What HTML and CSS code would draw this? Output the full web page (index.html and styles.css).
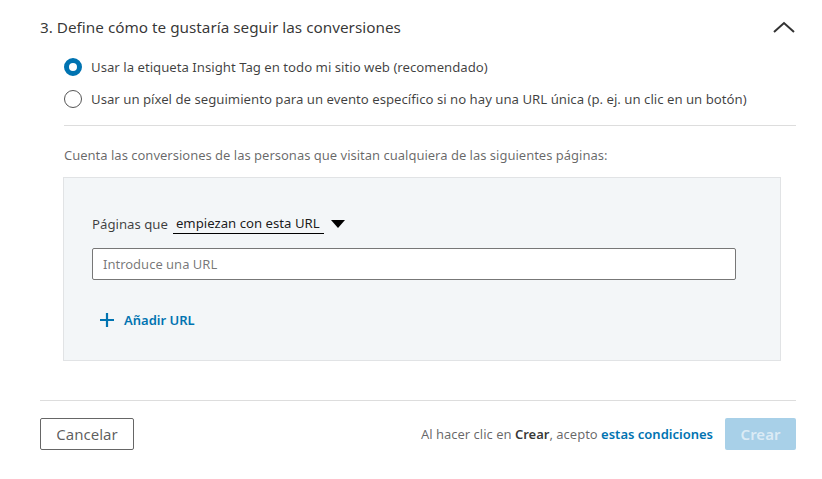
FILE: index.html
```html
<!DOCTYPE html>
<html lang="es">
<head>
    <meta charset="UTF-8">
    <meta name="viewport" content="width=device-width, initial-scale=1.0">
    <title>Conversiones</title>
    <link rel="stylesheet" href="styles.css">
</head>
<body>
    <div class="panel">
        <div class="section-head">
            <h2 class="section-title">3. Define cómo te gustaría seguir las conversiones</h2>
            <svg class="chevron" width="22" height="12" viewBox="0 0 22 12">
                <path d="M1 11 L11 2 L21 11" fill="none" stroke="#333" stroke-width="2"/>
            </svg>
        </div>

        <div class="options">
            <label class="option">
                <span class="radio checked"></span>
                <span>Usar la etiqueta Insight Tag en todo mi sitio web (recomendado)</span>
            </label>
            <label class="option">
                <span class="radio"></span>
                <span>Usar un píxel de seguimiento para un evento específico si no hay una URL única (p. ej. un clic en un botón)</span>
            </label>
        </div>

        <div class="rule-box">
            <p class="hint">Cuenta las conversiones de las personas que visitan cualquiera de las siguientes páginas:</p>
            <div class="url-box">
                <div class="match-row">
                    <span>Páginas que</span>
                    <span class="select">empiezan con esta URL</span>
                    <svg class="caret" width="14" height="8" viewBox="0 0 14 8">
                        <path d="M0 0 H14 L7 8 Z" fill="#000"/>
                    </svg>
                </div>
                <input class="url-input" type="text" placeholder="Introduce una URL">
                <a class="add-url" href="#">
                    <svg width="14" height="14" viewBox="0 0 14 14">
                        <path d="M7 0 V14 M0 7 H14" stroke="#0073b1" stroke-width="2.2"/>
                    </svg>
                    Añadir URL
                </a>
            </div>
        </div>

        <div class="footer">
            <button class="btn btn-cancel">Cancelar</button>
            <div class="footer-right">
                <span class="terms">Al hacer clic en <b>Crear</b>, acepto <a href="#">estas condiciones</a></span>
                <button class="btn btn-create" disabled>Crear</button>
            </div>
        </div>
    </div>
</body>
</html>
```

FILE: styles.css
```css
body {
    margin: 0;
    font-family: "Noto Sans", "Open Sans", sans-serif;
    background-color: #fff;
    color: rgba(0, 0, 0, 0.75);
}

.panel {
    padding: 0 26px 0 40px;
}

.section-head {
    display: flex;
    justify-content: space-between;
    align-items: center;
    height: 51px;
    padding-top: 3px;
    box-sizing: border-box;
}

.section-title {
    margin: 0;
    font-size: 15.3px;
    font-weight: 400;
    color: rgba(0, 0, 0, 0.8);
}

.chevron {
    margin-right: 1px;
}

.options {
    margin-left: 24px;
    padding-bottom: 10px;
    border-bottom: 1px solid #ddd;
}

.option {
    display: flex;
    align-items: center;
    height: 32px;
    font-size: 13.2px;
    color: rgba(0, 0, 0, 0.75);
}

.radio {
    width: 18px;
    height: 18px;
    box-sizing: border-box;
    border: 1px solid #555;
    border-radius: 50%;
    margin-right: 9px;
    background: #fff;
}

.radio.checked {
    border: 5px solid #0073b1;
}

.rule-box {
    padding-left: 23px;
    padding-right: 15px;
    padding-bottom: 39px;
    border-bottom: 1px solid #ddd;
}

.hint {
    margin: 20px 0 13px 1px;
    font-size: 13px;
    color: rgba(0, 0, 0, 0.6);
}

.url-box {
    background-color: #f3f6f8;
    border: 1px solid #e1e3e5;
    height: 184px;
    box-sizing: border-box;
    padding: 35px 44px 0 28px;
}

.match-row {
    display: flex;
    align-items: center;
    font-size: 13.2px;
    color: rgba(0, 0, 0, 0.75);
}

.select {
    margin-left: 5px;
    padding: 0 4px 0 3px;
    border-bottom: 1px solid #000;
    color: rgba(0, 0, 0, 0.9);
    line-height: 20px;
}

.caret {
    margin-left: 7px;
}

.url-input {
    display: block;
    width: 100%;
    height: 32px;
    box-sizing: border-box;
    margin-top: 14px;
    padding: 0 10px;
    border: 1px solid #777;
    border-radius: 2px;
    font-family: inherit;
    font-size: 13px;
}

.url-input::placeholder {
    color: rgba(0, 0, 0, 0.55);
}

.add-url {
    display: inline-flex;
    align-items: center;
    gap: 10px;
    margin-top: 31px;
    margin-left: 8px;
    font-size: 13px;
    font-weight: 600;
    color: #0073b1;
    text-decoration: none;
}

.footer {
    display: flex;
    justify-content: space-between;
    align-items: center;
    padding-top: 17px;
}

.footer-right {
    display: flex;
    align-items: center;
    gap: 12px;
}

.terms {
    font-size: 13px;
    color: rgba(0, 0, 0, 0.6);
}

.terms b {
    font-weight: 600;
    color: rgba(0, 0, 0, 0.8);
}

.terms a {
    color: #0073b1;
    font-weight: 600;
    text-decoration: none;
}

.btn {
    height: 32px;
    font-family: inherit;
    font-size: 15px;
    border-radius: 2px;
    cursor: pointer;
}

.btn-cancel {
    width: 94px;
    background: #fff;
    border: 1px solid #666;
    color: rgba(0, 0, 0, 0.65);
}

.btn-create {
    width: 71px;
    border: none;
    background-color: #a8d0e8;
    color: rgba(255, 255, 255, 0.6);
    font-weight: 600;
}
```
